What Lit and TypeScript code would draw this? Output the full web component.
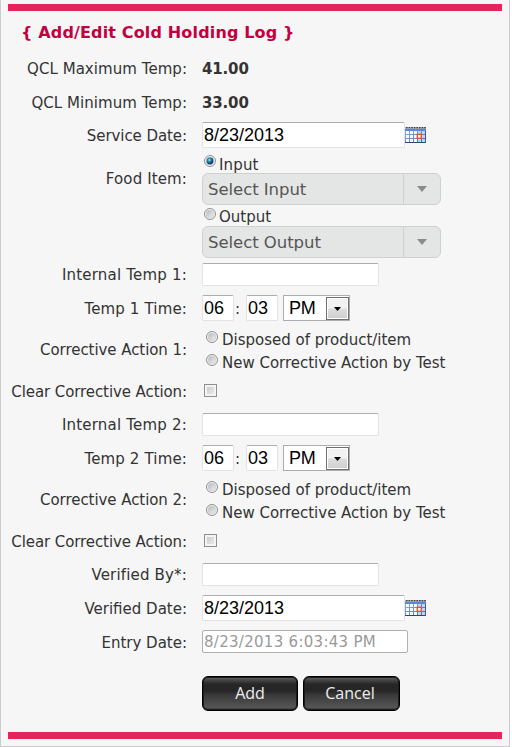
import { LitElement, html, css, svg } from "lit";
import { customElement, property } from "lit/decorators.js";
import { classMap } from "lit/directives/class-map.js";
import { styleMap } from "lit/directives/style-map.js";

@customElement("radio-dot")
class RadioDot extends LitElement {
  @property({ type: Boolean }) checked = false;
  static styles = css`
    :host { display: block; width: 12px; height: 12px; }
    svg { display: block; }
  `;
  render() {
    return html`<svg width="12" height="12" viewBox="0 0 12 12">
      <defs>
        <linearGradient id="g" x1="0" y1="0" x2="1" y2="1">
          <stop offset="0" stop-color="#b4b7ba" /><stop offset="1" stop-color="#f2f2f2" />
        </linearGradient>
        <radialGradient id="b" cx=".4" cy=".35" r=".65">
          <stop offset="0" stop-color="#a5e4fa" /><stop offset=".4" stop-color="#2384b4" /><stop offset="1" stop-color="#0b2f50" />
        </radialGradient>
      </defs>
      <circle cx="6" cy="6" r="5.5" fill="#f6f6f6" stroke="#8c8e8f" />
      <circle cx="6" cy="6" r="3.9" fill="url(#g)" stroke="#c9cbcd" stroke-width=".6" />
      ${this.checked ? svg`<circle cx="6" cy="6" r="3.4" fill="url(#b)" />` : ""}
    </svg>`;
  }
}

@customElement("calendar-icon")
class CalendarIcon extends LitElement {
  static styles = css`
    :host { display: block; width: 21px; height: 16px; }
    svg { display: block; }
  `;
  render() {
    return html`<svg width="21" height="16" viewBox="0 0 21 16">
      <defs>
        <linearGradient id="f" x1="0" y1="0" x2="1" y2="1">
          <stop offset="0" stop-color="#9db8e4" /><stop offset="1" stop-color="#46659c" />
        </linearGradient>
      </defs>
      <rect y="1" width="21" height="15" fill="url(#f)" />
      <rect y="0" width="21" height="1.5" fill="#b9b9b9" />
      <path d="M1 .7H21" stroke="#444" stroke-width="1.3" stroke-dasharray="1.6 1" />
      <rect y="2" width="21" height="2" fill="#5a87d8" />
      ${[4, 8, 12].map((y) =>
        [1, 5, 9, 13, 17].map(
          (x) => svg`<rect x=${x} y=${y} width="3" height="3" fill=${x > 12 ? "#c3d4ef" : "#f4f8ff"} />`
        )
      )}
      <rect x="12.3" y="7.3" width="4" height="4" fill="#fff" stroke="#e2552d" stroke-width="1.4" />
      <path d="M0 15.5H21" stroke="#2c4770" />
      <path d="M20.5 4V16" stroke="#3c5a8c" />
    </svg>`;
  }
}

@customElement("app-root")
class AppRoot extends LitElement {
  static styles = css`
    :host {
      display: block;
      width: 512px;
      height: 747px;
      background: #fff;
      overflow: hidden;
      font: 15px/18px "DejaVu Sans", Verdana, sans-serif;
      color: #333;
    }
    * { box-sizing: border-box; }
    .panel {
      width: 510px;
      height: 747px;
      background: #f6f6f6;
      border: 1px solid #ccc;
      border-top: 0;
      padding: 4px 7px 7px;
      display: flex;
      flex-direction: column;
      white-space: nowrap;
    }
    .bar { height: 7px; background: #e5235c; flex: none; }
    .title {
      margin: 0;
      padding: 13px 0 0 13px;
      height: 41px;
      font-size: 16px;
      line-height: 18px;
      font-weight: bold;
      color: #c2003f;
      letter-spacing: 0.15px;
    }
    .row { display: grid; grid-template-columns: 179px 1fr; column-gap: 15px; align-items: center; }
    .label { text-align: right; padding-top: 1px; }
    .r-info .label, .r-temp .label, .r-temp2 .label, .r-act .label { padding-top: 0; }
    .r-info { height: 34px; }
    .r-date { height: 30px; }
    .r-food { height: 110px; align-items: start; }
    .r-food .label { padding-top: 20px; }
    .r-temp { height: 29px; }
    .r-time { height: 38px; }
    .r-time2 { height: 37px; padding-bottom: 1px; }
    .r-act { height: 46px; }
    .r-clear { height: 36px; }
    .r-temp2 { height: 31px; }
    .r-ver { height: 31px; }
    .r-vdate { height: 36px; }
    .r-entry { height: 31px; }
    .r-entry .label { padding-top: 3px; }
    .bold { font-weight: bold; letter-spacing: -0.15px; }
    .line { display: flex; align-items: center; }
    .field {
      height: 23px;
      width: 177px;
      background: #fff;
      border: 1px solid #e2e3e6;
      border-top-color: #abadb3;
      border-radius: 2px;
    }
    .big {
      height: 26px;
      padding-left: 1px;
      font: 18px/25px "Liberation Sans", Arial, sans-serif;
      color: #000;
    }
    .date { width: 203px; }
    .time { width: 32px; }
    .colon { width: 12px; padding-left: 1px; padding-top: 1px; }
    .entry { width: 206px; border-color: #afafaf; color: #9a9a9a; padding-left: 1px; line-height: 23px; letter-spacing: 0.29px; }
    .ampm {
      margin-left: 5px;
      width: 67px;
      height: 26px;
      background: #fff;
      border: 1px solid #abadb3;
      display: flex;
      justify-content: space-between;
      padding-left: 5px;
      font: 18px/25px "Liberation Sans", Arial, sans-serif;
      letter-spacing: -0.3px;
      color: #000;
    }
    .drop {
      width: 23px;
      height: 23px;
      margin-top: 1px;
      border: 1px solid #707070;
      box-shadow: inset 0 0 0 1px #fff;
      background: linear-gradient(#f2f2f2 48%, #dedede 52%, #cfcfcf);
      display: grid;
      place-items: center;
    }
    .choice { display: flex; align-items: flex-start; }
    .food { padding-top: 4px; }
    .food .choice { height: 19px; padding-left: 2px; }
    .food .choice span { padding: 2px 0 0 3px; letter-spacing: 0.15px; }
    .food .second span { padding-top: 1px; letter-spacing: 0; }
    .food radio-dot { margin-top: 1px; }
    .food .second { height: 21px; padding-top: 2px; }
    .combo {
      width: 239px;
      height: 32px;
      border: 1px solid #cfd1d0;
      border-radius: 6px;
      background: #e4e6e5;
      color: #555;
      display: flex;
      font-size: 16.5px;
      line-height: 31px;
      letter-spacing: -0.05px;
      padding-left: 5px;
      justify-content: space-between;
    }
    .arrow { width: 37px; border-left: 1px solid #cfd1d0; display: grid; place-items: center; }
    .acts .choice { height: 23px; padding: 4px 0 0 4px; }
    .acts .choice span { padding: 0 0 0 4px; letter-spacing: -0.01px; }
    .check {
      width: 13px;
      height: 13px;
      margin: -1px 0 0 2px;
      border: 1px solid #8e8f8f;
      background: linear-gradient(135deg, #bfc2c5, #f3f3f3);
      box-shadow: inset 0 0 0 2px #f4f4f4;
    }
    .buttons { display: flex; gap: 5px; padding: 19px 0 0 194px; flex: 1; }
    .btn {
      height: 35px;
      border: 1px solid #000;
      border-radius: 6px;
      background: linear-gradient(#6a6a6a 0, #4a4a4a 8%, #262626 22%, #262626 42%, #3a3a3a 55%, #484848 75%, #555 92%, #333);
      box-shadow: inset 0 0 0 1px #1c1c1c;
      color: #eee;
      font: 500 16px/33px "Open Sans", "Noto Sans", sans-serif;
      text-align: center;
    }
    .add { width: 96px; }
    .cancel { width: 97px; padding-right: 3px; }
  `;

  private row(label: string, tracking: number, cls: string, content: unknown) {
    return html`<div class="row ${cls}">
      <div class="label" style=${styleMap({ letterSpacing: `${tracking}px` })}>${label}</div>
      ${content}
    </div>`;
  }

  private date() {
    return html`<div class="line"><div class="field big date">8/23/2013</div><calendar-icon></calendar-icon></div>`;
  }

  private choice(text: string, checked = false, second = false) {
    return html`<div class=${classMap({ choice: true, second })}><radio-dot ?checked=${checked}></radio-dot><span>${text}</span></div>`;
  }

  private combo(text: string) {
    return html`<div class="combo"><span>${text}</span><div class="arrow">
      <svg width="10" height="6"><path d="M0 0H10L5 6Z" fill="#8b8b8b" /></svg></div></div>`;
  }

  private readings(n: number) {
    return html`
      ${this.row(`Internal Temp ${n}:`, 0.2, n === 1 ? "r-temp" : "r-temp2", html`<div class="field"></div>`)}
      ${this.row(
        `Temp ${n} Time:`,
        0.15,
        n === 1 ? "r-time" : "r-time2",
        html`<div class="line">
          <div class="field big time">06</div><div class="colon">:</div><div class="field big time">03</div>
          <div class="ampm"><span>PM</span><div class="drop"><svg width="7" height="4"><path d="M0 0H7L3.5 4Z" fill="#000" /></svg></div></div>
        </div>`
      )}
      ${this.row(
        `Corrective Action ${n}:`,
        -0.06,
        "r-act",
        html`<div class="acts">${this.choice("Disposed of product/item")}${this.choice("New Corrective Action by Test")}</div>`
      )}
      ${this.row("Clear Corrective Action:", -0.09, "r-clear", html`<div class="check"></div>`)}
    `;
  }

  render() {
    return html`<div class="panel">
      <div class="bar"></div>
      <h1 class="title">{ Add/Edit Cold Holding Log }</h1>
      ${this.row("QCL Maximum Temp:", 0.05, "r-info", html`<div class="bold">41.00</div>`)}
      ${this.row("QCL Minimum Temp:", 0.05, "r-info", html`<div class="bold">33.00</div>`)}
      ${this.row("Service Date:", -0.07, "r-date", this.date())}
      ${this.row(
        "Food Item:",
        0.12,
        "r-food",
        html`<div class="food">
          ${this.choice("Input", true)}${this.combo("Select Input")}${this.choice("Output", false, true)}${this.combo("Select Output")}
        </div>`
      )}
      ${this.readings(1)} ${this.readings(2)}
      ${this.row("Verified By*:", 0.17, "r-ver", html`<div class="field"></div>`)}
      ${this.row("Verified Date:", 0, "r-vdate", this.date())}
      ${this.row("Entry Date:", 0, "r-entry", html`<div class="field entry">8/23/2013 6:03:43 PM</div>`)}
      <div class="buttons"><div class="btn add">Add</div><div class="btn cancel">Cancel</div></div>
      <div class="bar"></div>
    </div>`;
  }
}
